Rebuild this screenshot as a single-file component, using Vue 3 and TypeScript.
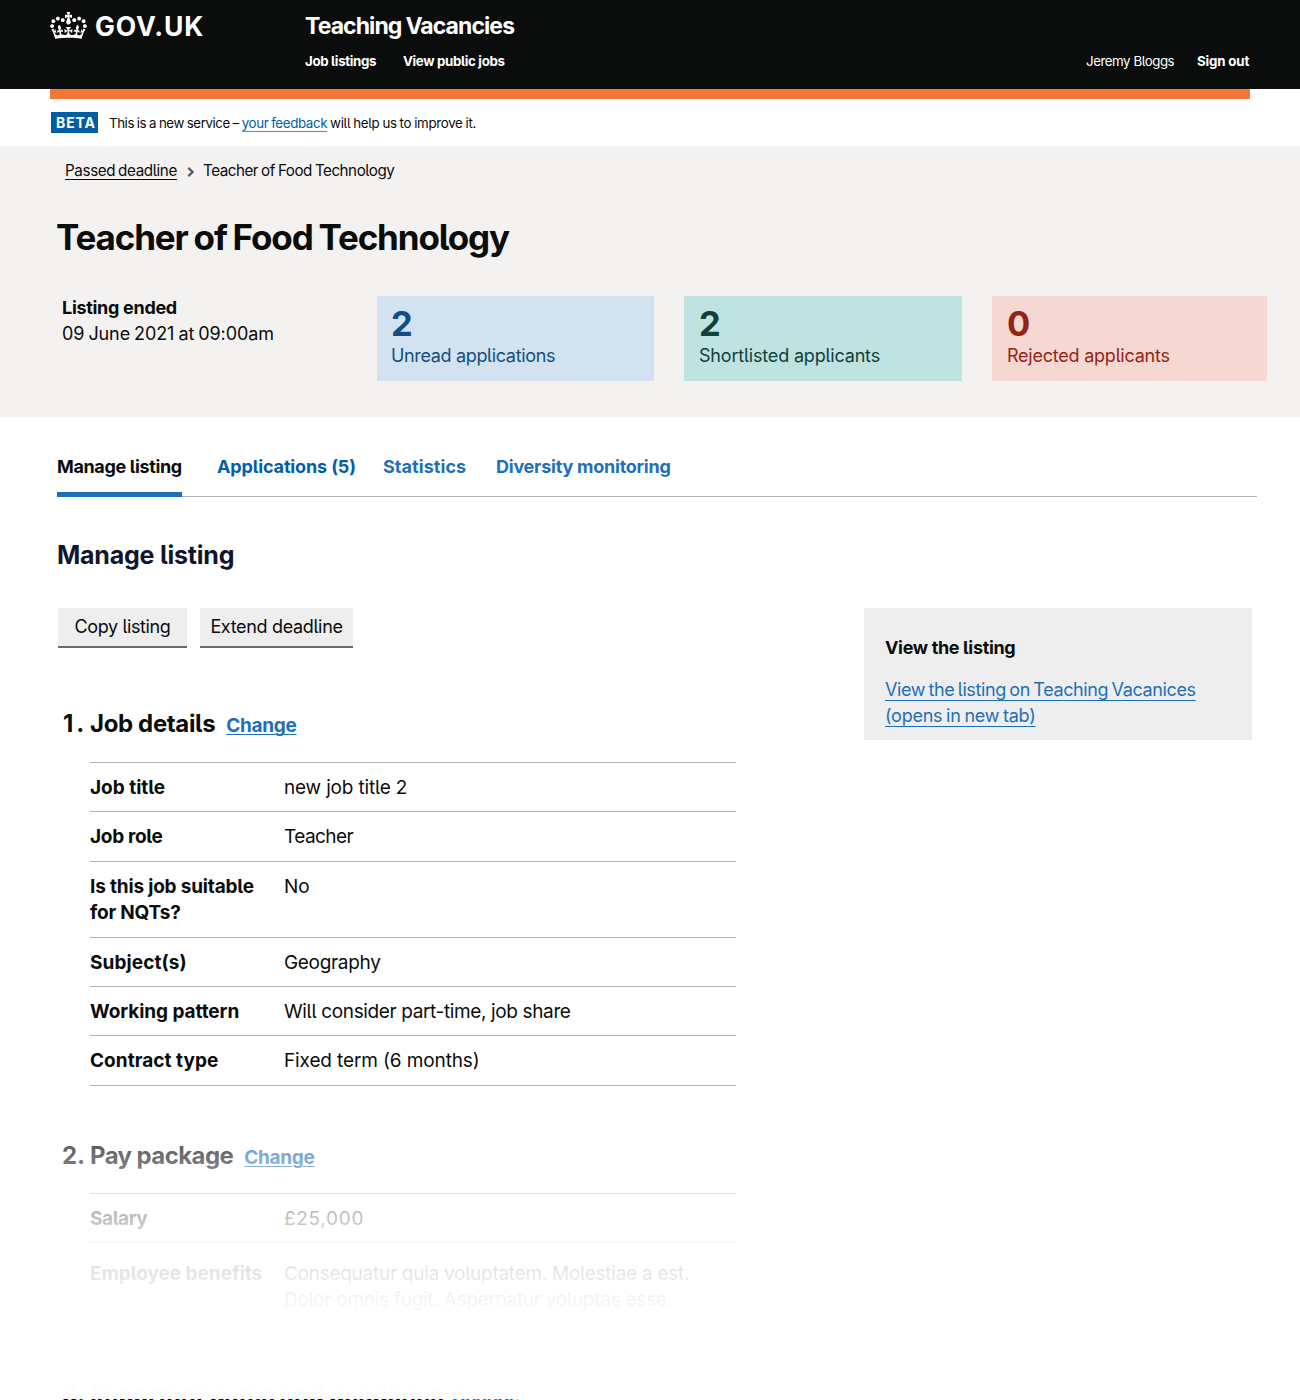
<script setup lang="ts">
interface Row {
  key: string
  value: string[]
  keyLines?: string[]
  k: string
  v: string
  size?: string
}

const nav = [
  { label: 'Job listings', cls: 'nav-a' },
  { label: 'View public jobs', cls: 'nav-b' },
]

const cards = [
  { count: 2, label: 'Unread applications', tone: 'blue' },
  { count: 2, label: 'Shortlisted applicants', tone: 'green' },
  { count: 0, label: 'Rejected applicants', tone: 'red' },
]

const tabs = [
  { label: 'Manage listing', cls: 'tab-manage' },
  { label: 'Applications (5)', cls: 'tab-apps' },
  { label: 'Statistics', cls: 'tab-stats' },
  { label: 'Diversity monitoring', cls: 'tab-div' },
]

const details: Row[] = [
  { key: 'Job title', value: ['new job title 2'], k: '0', v: '-0.17px' },
  { key: 'Job role', value: ['Teacher'], k: '-0.3px', v: '-0.55px' },
  { key: 'nqt', keyLines: ['Is this job suitable', 'for NQTs?'], value: ['No'], k: '-0.18px', v: '0', size: 'double' },
  { key: 'Subject(s)', value: ['Geography'], k: '0.1px', v: '-0.32px' },
  { key: 'Working pattern', value: ['Will consider part-time, job share'], k: '-0.07px', v: '-0.37px' },
  { key: 'Contract type', value: ['Fixed term (6 months)'], k: '0.04px', v: '-0.12px' },
]

const pay: Row[] = [
  { key: 'Salary', value: ['£25,000'], k: '-0.42px', v: '0.7px' },
  {
    key: 'Employee benefits',
    value: ['Consequatur quia voluptatem. Molestiae a est.', 'Dolor omnis fugit. Aspernatur voluptas esse.'],
    k: '-0.03px',
    v: '-0.27px',
    size: 'benefits',
  },
]

const sections = [
  { num: '1.', title: 'Job details', rows: details, cls: 'section-job' },
  { num: '2.', title: 'Pay package', rows: pay, cls: 'section-pay' },
  { num: '3.', title: 'Important dates and deadlines', rows: [] as Row[], cls: 'section-dates' },
]
</script>

<template>
  <div class="page">
    <header class="header">
      <a class="logo">
        <svg class="crown" viewBox="0 0 132 97" fill="currentColor" aria-hidden="true">
          <path d="M25 30.2c3.5 1.5 7.7-.2 9.1-3.7 1.5-3.6-.2-7.8-3.9-9.2-3.6-1.4-7.6.3-9.1 3.9-1.4 3.5.3 7.5 3.9 9zM9 39.5c3.6 1.5 7.8-.2 9.2-3.7 1.5-3.6-.2-7.8-3.9-9.1-3.6-1.5-7.6.2-9.1 3.8-1.4 3.5.3 7.5 3.8 9zM4.4 57.2c3.5 1.5 7.7-.2 9.1-3.8 1.5-3.6-.2-7.7-3.9-9.1-3.5-1.5-7.6.3-9.1 3.8-1.4 3.5.3 7.6 3.9 9.1zm38.3-21.4c3.5 1.5 7.7-.2 9.1-3.8 1.5-3.6-.2-7.7-3.9-9.1-3.6-1.5-7.6.3-9.1 3.8-1.3 3.6.4 7.7 3.9 9.1zm64.4-5.6c-3.6 1.5-7.8-.2-9.1-3.7-1.5-3.6.2-7.8 3.8-9.2 3.6-1.4 7.7.3 9.2 3.9 1.3 3.5-.4 7.5-3.9 9zm15.9 9.3c-3.6 1.5-7.7-.2-9.1-3.7-1.5-3.6.2-7.8 3.7-9.1 3.6-1.5 7.7.2 9.2 3.8 1.5 3.5-.3 7.5-3.8 9zm4.7 17.7c-3.6 1.5-7.8-.2-9.2-3.8-1.5-3.6.2-7.7 3.9-9.1 3.6-1.5 7.7.3 9.2 3.8 1.3 3.5-.4 7.6-3.9 9.1zM89.3 35.8c-3.6 1.5-7.8-.2-9.2-3.8-1.4-3.6.2-7.7 3.9-9.1 3.6-1.5 7.7.3 9.2 3.8 1.4 3.6-.3 7.7-3.9 9.1zM69.7 17.7l8.9 4.7V9.3l-8.9 2.8c-.2-.3-.5-.6-.9-.9L72.4 0H59.6l3.5 11.2c-.3.3-.6.5-.9.9l-8.8-2.8v13.1l8.8-4.7c.3.3.6.7.9.9l-5 15.4v.1c-.2.8-.4 1.6-.4 2.4 0 4.1 3.1 7.5 7 8.1h.2c.3 0 .7.1 1 .1.4 0 .7 0 1-.1h.2c4-.6 7.1-4.1 7.1-8.1 0-.8-.1-1.7-.4-2.4V34l-5.1-15.4c.4-.2.7-.6 1-.9zM66 92.8c16.9 0 32.8 1.1 47.1 3.2 4-16.9 8.9-26.7 14-33.5l-9.6-3.4c1 4.9 1.1 7.2 0 10.2-1.5-1.4-3-4.3-4.2-8.7L108.6 76c2.8-2 5-3.2 7.5-3.3-4.4 9.4-10 11.9-13.6 11.2-4.3-.8-6.3-4.6-5.6-7.9 1-4.7 5.7-5.9 8-.5 4.3-8.7-3-11.4-7.6-8.8 7.1-7.2 7.9-13.5 2.1-21.1-8 6.1-8.1 12.3-4.5 20.8-4.7-5.4-12.1-2.5-9.5 6.2 3.4-5.2 7.9-2 7.2 3.1-.6 4.3-6.4 7.8-13.5 7.2-10.3-.9-10.9-8-11.2-13.8 2.5-.5 7.1 1.8 11 7.3L80.2 60c-4.1 4.4-8 5.3-12.3 5.4 1.4-4.4 8-11.6 8-11.6H55.5s6.4 7.2 7.9 11.6c-4.2-.1-8-1-12.3-5.4l1.4 16.4c3.9-5.5 8.5-7.7 10.9-7.3-.3 5.8-.9 12.8-11.1 13.8-7.2.6-12.9-2.9-13.5-7.2-.7-5 3.8-8.3 7.1-3.1 2.7-8.7-4.6-11.6-9.4-6.2 3.7-8.5 3.6-14.7-4.6-20.8-5.8 7.6-5 13.9 2.2 21.1-4.7-2.6-11.9.1-7.7 8.8 2.3-5.5 7.1-4.2 8.1.5.7 3.3-1.3 7.1-5.7 7.9-3.5.7-9-1.8-13.5-11.2 2.5.1 4.7 1.3 7.5 3.3l-4.7-15.4c-1.2 4.4-2.7 7.2-4.3 8.7-1.1-3-.9-5.3 0-10.2l-9.5 3.4c5 6.9 9.9 16.7 14 33.5 14.8-2.1 30.8-3.2 47.7-3.2z" />
        </svg>
        <span class="logo-text">GOV.UK</span>
      </a>
      <div class="header-main">
        <div class="service">Teaching Vacancies</div>
        <div class="header-row">
          <nav class="nav">
            <a v-for="n in nav" :key="n.label" :class="n.cls">{{ n.label }}</a>
          </nav>
          <div class="account">
            <span class="user">Jeremy Bloggs</span>
            <a class="signout">Sign out</a>
          </div>
        </div>
      </div>
    </header>
    <div class="accent"></div>

    <div class="phase">
      <strong class="tag">BETA</strong>
      <span class="phase-text"><span class="phase-lead">This is a new service – </span><a class="feedback">your feedback</a> will help us to improve it.</span>
    </div>

    <section class="summary">
      <div class="crumbs">
        <a class="crumb-link">Passed deadline</a>
        <svg class="chevron" viewBox="0 0 8 10" fill="none" stroke="#505a5f" stroke-width="2.2"><path d="M1.3 0.9L5.6 5L1.3 9.1" /></svg>
        <span class="crumb-here">Teacher of Food Technology</span>
      </div>
      <h1 class="title">Teacher of Food Technology</h1>
      <div class="stats">
        <div class="ended">
          <strong class="ended-label">Listing ended</strong>
          <span class="ended-date">09 June 2021 at 09:00am</span>
        </div>
        <div v-for="c in cards" :key="c.tone" class="card" :class="c.tone">
          <span class="count">{{ c.count }}</span>
          <span class="card-label">{{ c.label }}</span>
        </div>
      </div>
    </section>

    <nav class="tabs">
      <a v-for="t in tabs" :key="t.label" class="tab" :class="t.cls">{{ t.label }}</a>
    </nav>

    <h2 class="heading">Manage listing</h2>

    <div class="columns">
      <main class="main">
        <div class="buttons">
          <button class="btn btn-copy">Copy listing</button>
          <button class="btn btn-extend">Extend deadline</button>
        </div>
        <section v-for="s in sections" :key="s.num" class="section" :class="s.cls">
          <h3 class="section-head">
            <span class="num">{{ s.num }}</span>
            <span class="section-title">{{ s.title }}</span>
            <a class="change">Change</a>
          </h3>
          <dl v-if="s.rows.length" class="list">
            <div v-for="r in s.rows" :key="r.key" class="row" :class="r.size">
              <dt :style="{ letterSpacing: r.k }">
                <span v-for="line in r.keyLines ?? [r.key]" :key="line">{{ line }}</span>
              </dt>
              <dd :style="{ letterSpacing: r.v }">
                <span v-for="line in r.value" :key="line">{{ line }}</span>
              </dd>
            </div>
          </dl>
        </section>
        <div class="fade"></div>
      </main>
      <aside class="aside">
        <strong class="aside-title">View the listing</strong>
        <a class="aside-link"><span class="l1">View the listing on Teaching Vacanices</span><br /><span class="l2">(opens in new tab)</span></a>
      </aside>
    </div>
  </div>
</template>

<style>
body {
  margin: 0;
  overflow: hidden;
}
</style>

<style scoped>
* {
  box-sizing: border-box;
}
.page {
  width: 1300px;
  height: 1400px;
  overflow: hidden;
  background: #fff;
  color: #0b0c0c;
  font-family: Inter, "Liberation Sans", sans-serif;
  font-size: 18px;
  line-height: 26px;
  font-feature-settings: "cv05";
  white-space: nowrap;
}
.header {
  display: flex;
  height: 89px;
  padding: 12px 50px 0;
  background: #0b0c0c;
  color: #fff;
}
.logo {
  display: flex;
  width: 255px;
}
.crown {
  display: block;
  width: 37px;
  height: 27px;
}
.logo-text {
  margin-left: 8px;
  font-size: 26.5px;
  font-weight: 700;
  line-height: 28px;
  letter-spacing: 0.9px;
}
.header-main {
  flex: 1;
}
.service {
  font-size: 23px;
  font-weight: 700;
  line-height: 28px;
  letter-spacing: -0.92px;
  word-spacing: -0.5px;
}
.header-row {
  display: flex;
  justify-content: space-between;
  margin-top: 11px;
  font-size: 13.3px;
  line-height: 20px;
}
.nav {
  display: flex;
  font-weight: 700;
  letter-spacing: -0.34px;
}
.nav-a {
  width: 98px;
}
.account {
  display: flex;
}
.user {
  width: 111px;
  letter-spacing: -0.45px;
}
.signout {
  width: 53px;
  font-weight: 700;
  letter-spacing: -0.17px;
}
.accent {
  height: 10px;
  margin: 0 50px;
  background: #f47738;
}
.phase {
  display: flex;
  align-items: center;
  height: 47px;
  padding: 0 51px;
}
.tag {
  width: 47px;
  height: 21px;
  margin-right: 11px;
  padding-left: 5px;
  background: #005ea5;
  color: #fff;
  font-size: 14px;
  font-weight: 700;
  line-height: 22px;
  letter-spacing: 0.9px;
}
.phase-text {
  font-size: 13.3px;
  line-height: 20px;
  letter-spacing: -0.3px;
  word-spacing: -0.5px;
}
.phase-lead {
  letter-spacing: -0.42px;
}
.feedback {
  color: #005ea5;
  border-bottom: 1px solid #4f8fc3;
  letter-spacing: -0.36px;
}
.summary {
  height: 271px;
  padding-top: 15px;
  background: #f3f2f1;
}
.crumbs {
  display: flex;
  align-items: center;
  padding-left: 65px;
  font-size: 15.2px;
  line-height: 20px;
}
.crumb-link {
  width: 112px;
  text-decoration: underline;
  text-decoration-thickness: 1px;
  text-underline-offset: 3px;
  letter-spacing: -0.37px;
  word-spacing: -1px;
}
.chevron {
  width: 8px;
  height: 10px;
  margin: 2px 8px 0 10px;
}
.crumb-here {
  letter-spacing: -0.47px;
  word-spacing: -0.8px;
}
.title {
  margin: 35px 0 0 56px;
  font-size: 35px;
  font-weight: 700;
  line-height: 42px;
  letter-spacing: -1.13px;
  word-spacing: -1.3px;
}
.stats {
  display: flex;
  margin-top: 38px;
}
.ended {
  display: flex;
  flex-direction: column;
  width: 377px;
  padding-left: 62px;
}
.ended-label {
  margin-top: -1px;
  font-weight: 700;
  letter-spacing: -0.3px;
}
.ended-date {
  letter-spacing: -0.1px;
  word-spacing: -0.9px;
}
.card {
  display: flex;
  flex-direction: column;
  width: 277px;
  height: 85px;
  margin-right: 30px;
  padding: 8px 0 0 14px;
}
.blue {
  background: #d2e2f1;
  color: #144e81;
  letter-spacing: -0.34px;
}
.green {
  width: 278px;
  padding-left: 15px;
  background: #bfe3e0;
  color: #10403c;
  letter-spacing: -0.18px;
}
.red {
  width: 275px;
  margin-right: 0;
  padding-left: 15px;
  background: #f6d7d2;
  color: #942514;
  letter-spacing: -0.23px;
}
.count {
  font-size: 34.5px;
  font-weight: 700;
  line-height: 39px;
}
.card-label {
  line-height: 26px;
}
.tabs {
  display: flex;
  height: 51px;
  margin: 29px 43px 0 57px;
  box-shadow: inset 0 -1px #b1b4b6;
  font-weight: 700;
}
.tab {
  height: 51px;
  padding-top: 8px;
  color: #1d70b8;
}
.tab-manage {
  width: 125px;
  margin-right: 35px;
  border-bottom: 5px solid #1d70b8;
  color: #0b0c0c;
  letter-spacing: -0.36px;
}
.tab-apps {
  width: 166px;
  color: #005ea5;
  letter-spacing: -0.13px;
}
.tab-stats {
  width: 113px;
  letter-spacing: 0.06px;
}
.tab-div {
  letter-spacing: -0.24px;
}
.heading {
  margin: 42px 0 0 57px;
  color: #11152c;
  font-size: 25px;
  font-weight: 700;
  line-height: 32px;
  letter-spacing: -0.22px;
}
.columns {
  display: flex;
  justify-content: space-between;
  align-items: flex-start;
  height: 792px;
  margin-top: 37px;
  padding: 0 48px 0 58px;
}
.main {
  position: relative;
  width: 678px;
}
.buttons {
  display: flex;
  gap: 13px;
}
.btn {
  display: block;
  width: 129px;
  height: 40px;
  padding: 0 0 1px;
  border: 0;
  border-bottom: 2px solid #6a6a6a;
  background: #eee;
  color: #0b0c0c;
  font: inherit;
  font-feature-settings: inherit;
  letter-spacing: -0.38px;
}
.btn-extend {
  width: 153px;
  letter-spacing: -0.33px;
}
.section-head {
  display: flex;
  margin: 0;
  padding-left: 5px;
  font-size: 24px;
  font-weight: 700;
  line-height: 32px;
}
.section-job {
  margin-top: 60.4px;
}
.section-pay {
  margin-top: 54px;
}
.section-dates {
  margin-top: 55px;
}
.num {
  width: 27px;
}
.section-job .num {
  letter-spacing: 3px;
}
.section-job .section-title {
  letter-spacing: -0.36px;
}
.section-pay .num {
  margin-left: -1px;
  width: 28px;
}
.section-pay .section-title {
  letter-spacing: -0.58px;
}
.section-dates .num {
  margin-left: -1px;
  width: 28px;
}
.section-dates .section-title {
  letter-spacing: -0.12px;
}
.change {
  margin-left: 11px;
  padding-top: 2px;
  color: #1d70b8;
  font-size: 19px;
  letter-spacing: -0.3px;
  text-decoration: underline;
  text-decoration-thickness: 1px;
  text-underline-offset: 2px;
}
.section-dates .change {
  margin-left: 8px;
  letter-spacing: -0.7px;
}
.list {
  margin: 19px 0 0 32px;
  border-top: 1px solid #b1b4b6;
  font-size: 19px;
  line-height: 26.6px;
}
.section-job .list {
  margin-top: 19.6px;
}
.row {
  display: flex;
  height: 49.3px;
  padding-top: 12px;
  border-bottom: 1px solid #b1b4b6;
}
.double {
  height: 76.3px;
}
.benefits {
  height: 81px;
  padding-top: 17.5px;
}
dt,
dd {
  display: flex;
  flex-direction: column;
  margin: 0;
}
dt {
  width: 194px;
  font-weight: 700;
}
.fade {
  position: absolute;
  top: 482px;
  left: 0;
  width: 100%;
  height: 309px;
  background: linear-gradient(
    to bottom,
    rgba(255, 255, 255, 0) 0,
    rgba(255, 255, 255, 0.4) 65px,
    rgba(255, 255, 255, 0.62) 103px,
    rgba(255, 255, 255, 0.74) 128px,
    rgba(255, 255, 255, 0.85) 153px,
    rgba(255, 255, 255, 0.89) 183px,
    rgba(255, 255, 255, 0.955) 210px,
    rgba(255, 255, 255, 0.99) 240px
  );
}
.aside {
  width: 388px;
  height: 132px;
  padding: 27px 21px 0;
  background: #eee;
}
.aside-title {
  display: block;
  font-weight: 700;
  letter-spacing: -0.34px;
}
.aside-link {
  display: block;
  margin-top: 16px;
  color: #1d70b8;
  text-decoration: underline;
  text-decoration-thickness: 1px;
  text-underline-offset: 4px;
}
.l1 {
  letter-spacing: -0.38px;
  word-spacing: -1.3px;
}
.l2 {
  letter-spacing: -0.25px;
  word-spacing: -1px;
}
</style>
